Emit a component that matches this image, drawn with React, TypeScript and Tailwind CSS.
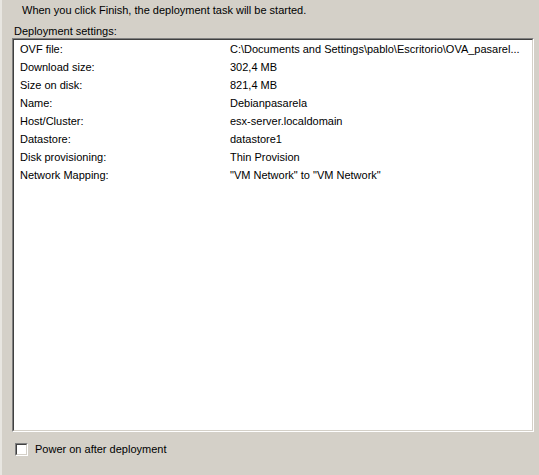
const rows: [string, string][] = [
  ['OVF file:', 'C:\\Documents and Settings\\pablo\\Escritorio\\OVA_pasarel...'],
  ['Download size:', '302,4 MB'],
  ['Size on disk:', '821,4 MB'],
  ['Name:', 'Debianpasarela'],
  ['Host/Cluster:', 'esx-server.localdomain'],
  ['Datastore:', 'datastore1'],
  ['Disk provisioning:', 'Thin Provision'],
  ['Network Mapping:', '"VM Network" to "VM Network"'],
];

export default function App() {
  return (
    <div className="w-[539px] h-[475px] bg-[#d4d0c8] text-[11px] text-black font-['Liberation_Sans',Arial,sans-serif] flex flex-col border-l-2 border-l-[#e8e6e1] overflow-hidden">
      <p className="pl-5 pt-[3px] h-[22px] leading-[14px]">
        When you click Finish, the deployment task will be started.
      </p>
      <p className="pl-3 h-[16px] leading-[16px] pt-px">Deployment settings:</p>
      <div className="ml-[10px] w-[522px] h-[394px] border-t border-l border-t-[#808080] border-l-[#808080] border-b border-r border-b-white border-r-white">
        <div className="h-full border-t border-l border-t-[#404040] border-l-[#404040] border-b border-r border-b-[#d4d0c8] border-r-[#d4d0c8] bg-white">
          {rows.map(([label, value]) => (
            <div key={label} className="flex h-[18px] items-center">
              <span className="w-[216px] pl-[6px]">{label}</span>
              <span>{value}</span>
            </div>
          ))}
        </div>
      </div>
      <label className="flex items-center gap-[7px] pl-[13px] mt-[9px]">
        <span className="w-[13px] h-[13px] border-t border-l border-t-[#808080] border-l-[#808080] border-b border-r border-b-white border-r-white">
          <span className="block w-full h-full bg-white border-t border-l border-t-[#404040] border-l-[#404040] border-b border-r border-b-[#d4d0c8] border-r-[#d4d0c8]" />
        </span>
        <span>Power on after deployment</span>
      </label>
    </div>
  );
}
